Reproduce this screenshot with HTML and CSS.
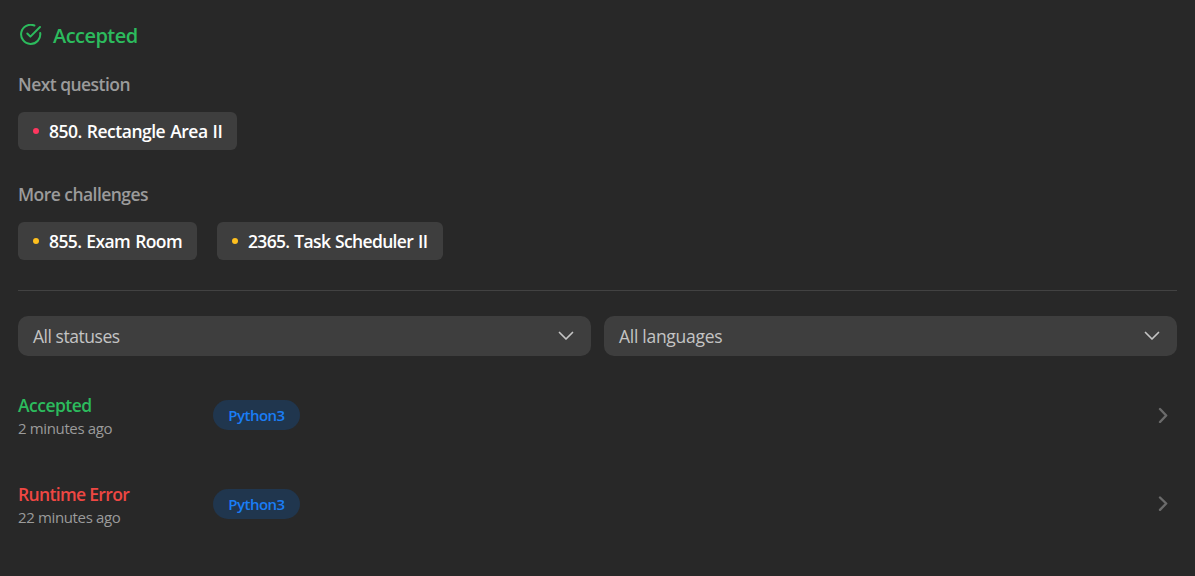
FILE: index.html
```
<!DOCTYPE html>
<html lang="en">
<head>
<meta charset="utf-8">
<title>Submissions</title>
<link rel="stylesheet" href="styles.css">
</head>
<body>
<main class="panel">
  <header class="result">
    <svg class="result-icon" width="22" height="22" viewBox="0 0 22 22" fill="none" stroke="currentColor" stroke-width="2" stroke-linecap="round" stroke-linejoin="round"><path d="M14.400 1.500A9.600 9.600 0 1 0 20.200 9"/><path d="M7.300 9.500L10.400 12.600L20 3"/></svg>
    <h1 class="result-title">Accepted</h1>
  </header>
  <section class="group">
    <h2 class="label">Next question</h2>
    <div class="chips">
      <a class="chip w-rect"><i class="dot hard"></i><span class="t-rect">850. Rectangle Area II</span></a>
    </div>
  </section>
  <section class="group">
    <h2 class="label">More challenges</h2>
    <div class="chips">
      <a class="chip w-exam"><i class="dot medium"></i><span class="t-exam">855. Exam Room</span></a>
      <a class="chip w-task"><i class="dot medium"></i><span class="t-task">2365. Task Scheduler II</span></a>
    </div>
  </section>
  <hr class="rule">
  <div class="filters">
    <div class="select"><span class="t-status">All statuses</span><svg width="16" height="10" viewBox="0 0 16 10" fill="none" stroke="currentColor" stroke-width="1.7" stroke-linecap="round" stroke-linejoin="round"><path d="M1.500 1.500L8 8L14.500 1.500"/></svg></div>
    <div class="select"><span class="t-lang">All languages</span><svg width="16" height="10" viewBox="0 0 16 10" fill="none" stroke="currentColor" stroke-width="1.7" stroke-linecap="round" stroke-linejoin="round"><path d="M1.500 1.500L8 8L14.500 1.500"/></svg></div>
  </div>
  <div class="rows">
    <div class="row">
      <div class="info"><div class="state ok">Accepted</div><div class="time">2 minutes ago</div></div>
      <div class="tag">Python3</div>
      <svg class="go" width="10" height="16" viewBox="0 0 10 16" fill="none" stroke="currentColor" stroke-width="2.400" stroke-linecap="round" stroke-linejoin="round"><path d="M2 2L8.200 8.500L2 15"/></svg>
    </div>
    <div class="row">
      <div class="info"><div class="state bad">Runtime Error</div><div class="time">22 minutes ago</div></div>
      <div class="tag">Python3</div>
      <svg class="go" width="10" height="16" viewBox="0 0 10 16" fill="none" stroke="currentColor" stroke-width="2.400" stroke-linecap="round" stroke-linejoin="round"><path d="M2 1.500L8.200 7.500L2 13.800"/></svg>
    </div>
  </div>
</main>
</body>
</html>
```
FILE: styles.css
```
* { box-sizing: border-box; }
body {
  margin: 0;
  background: #282828;
  font-family: "Open Sans", "Noto Sans", sans-serif;
  font-size: 17.500px;
  letter-spacing: -0.4px;
  white-space: nowrap;
}
.panel { height: 576px; padding: 22px 18px 0; overflow: hidden; }
.result { display: flex; height: 28px; color: #2cbb5d; }
.result-icon { margin: 2px 11px 0 2px; }
.result-title { margin: 0; font-size: 20px; line-height: 28px; font-weight: 600; letter-spacing: -0.55px; }
.label { margin: 0; height: 24px; font-size: 17.500px; line-height: 24px; font-weight: 600; letter-spacing: -0.55px; color: #9b9b9b; }
.group { padding-top: 22px; height: 100px; }
.group + .group { height: 110px; padding-top: 32px; }
.chips { display: flex; gap: 20px; margin-top: 16px; }
.chip { display: flex; align-items: center; height: 38px; padding-left: 15px; border-radius: 6px; background: #3e3e3e; color: #fff; font-weight: 600; word-spacing: 1px; }
.w-rect { width: 219px; }
.w-exam { width: 179px; }
.w-task { width: 226px; }
.t-rect { letter-spacing: -0.5px; }
.t-exam { letter-spacing: -0.6px; }
.t-task { letter-spacing: -0.67px; }
.dot { width: 6px; height: 6px; margin-right: 10px; border-radius: 50%; }
.hard { background: #ff375f; }
.medium { background: #ffc01e; }
.rule { height: 1px; margin: 30px 0 25px; border: 0; background: #424242; }
.filters { display: grid; grid-template-columns: 1fr 1fr; gap: 13px; }
.select { display: flex; align-items: center; justify-content: space-between; height: 40px; padding: 0 17px 0 15px; border-radius: 10px; background: #3e3e3e; color: #c4c4c4; }
.t-status { letter-spacing: -0.46px; }
.t-lang { letter-spacing: -0.28px; }
.rows { padding-top: 36px; }
.row { display: flex; height: 89px; }
.info { width: 195px; }
.state { height: 26px; line-height: 26px; font-weight: 600; }
.ok { color: #2cbb5d; letter-spacing: -0.52px; }
.bad { color: #ef4743; letter-spacing: -0.66px; }
.time { height: 20px; line-height: 20px; font-size: 15px; letter-spacing: -0.36px; color: #9b9b9b; }
.tag { width: 87px; height: 30px; margin-top: 8px; border-radius: 15px; background: #20364e; color: #1a7df5; font-size: 15px; line-height: 30px; font-weight: 600; letter-spacing: -0.53px; text-align: center; }
.go { margin: 15px 9.500px 0 auto; color: #6b6b6b; }
```
